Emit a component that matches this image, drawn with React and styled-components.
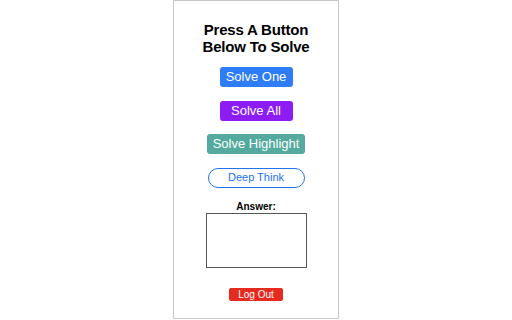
import styled, { createGlobalStyle } from "styled-components";

const Global = createGlobalStyle`
    html, body {
        margin: 0;
        padding: 0;
        background: #ffffff;
    }
    body {
        font-family: "Liberation Sans", Arial, sans-serif;
        color: #000;
    }
`;

const Page = styled.div`
    display: flex;
    justify-content: center;
    width: 512px;
    height: 320px;
`;

const Popup = styled.div`
    box-sizing: border-box;
    width: 166px;
    height: 319px;
    border: 1px solid #c9c9c9;
    display: flex;
    flex-direction: column;
    align-items: center;
`;

const Title = styled.h1`
    margin: 20px 0 0 0;
    font-size: 15px;
    line-height: 17px;
    font-weight: bold;
    letter-spacing: -0.2px;
    text-align: center;
`;

const ButtonStack = styled.div`
    display: flex;
    flex-direction: column;
    align-items: center;
    gap: 13.5px;
    margin-top: 12px;
`;

const SolveButton = styled.button`
    box-sizing: border-box;
    height: 20px;
    min-width: 73px;
    padding: 0 6px;
    border: 0;
    border-radius: 3px;
    background-color: ${(p) => p.$color};
    color: #fff;
    font-family: inherit;
    font-size: 13px;
    line-height: 20px;
    cursor: pointer;
`;

const OutlineButton = styled.button`
    box-sizing: border-box;
    width: 97px;
    height: 20px;
    border: 1.5px solid #2272f0;
    border-radius: 10px;
    background: #fff;
    color: #2272f0;
    font-family: inherit;
    font-size: 11px;
    line-height: 17px;
    padding: 0;
`;

const AnswerBlock = styled.div`
    display: flex;
    flex-direction: column;
    align-items: center;
    margin-top: 13px;
`;

const Label = styled.label`
    font-size: 10px;
    line-height: 12px;
    font-weight: bold;
`;

const AnswerBox = styled.textarea`
    box-sizing: border-box;
    width: 101px;
    height: 55px;
    border: 1px solid #555;
    resize: none;
    outline: none;
    padding: 2px;
    font-family: inherit;
`;

const LogOutButton = styled.button`
    box-sizing: border-box;
    width: 54px;
    height: 13px;
    margin-top: 20px;
    padding: 0;
    border: 0;
    border-radius: 2px;
    background: #e52a20;
    color: #fff;
    font-family: inherit;
    font-size: 10px;
    line-height: 13px;
`;

export default function App() {
    return <>
        <Global />
        <Page>
            <Popup>
                <Title>Press A Button<br />Below To Solve</Title>
                <ButtonStack>
                    <SolveButton $color="#2e7cf6">Solve One</SolveButton>
                    <SolveButton $color="#8d1cf5">Solve All</SolveButton>
                    <SolveButton $color="#54aa9e">Solve Highlight</SolveButton>
                    <OutlineButton>Deep Think</OutlineButton>
                </ButtonStack>
                <AnswerBlock>
                    <Label htmlFor="answer">Answer:</Label>
                    <AnswerBox id="answer" />
                </AnswerBlock>
                <LogOutButton>Log Out</LogOutButton>
            </Popup>
        </Page>
    </>;
}
